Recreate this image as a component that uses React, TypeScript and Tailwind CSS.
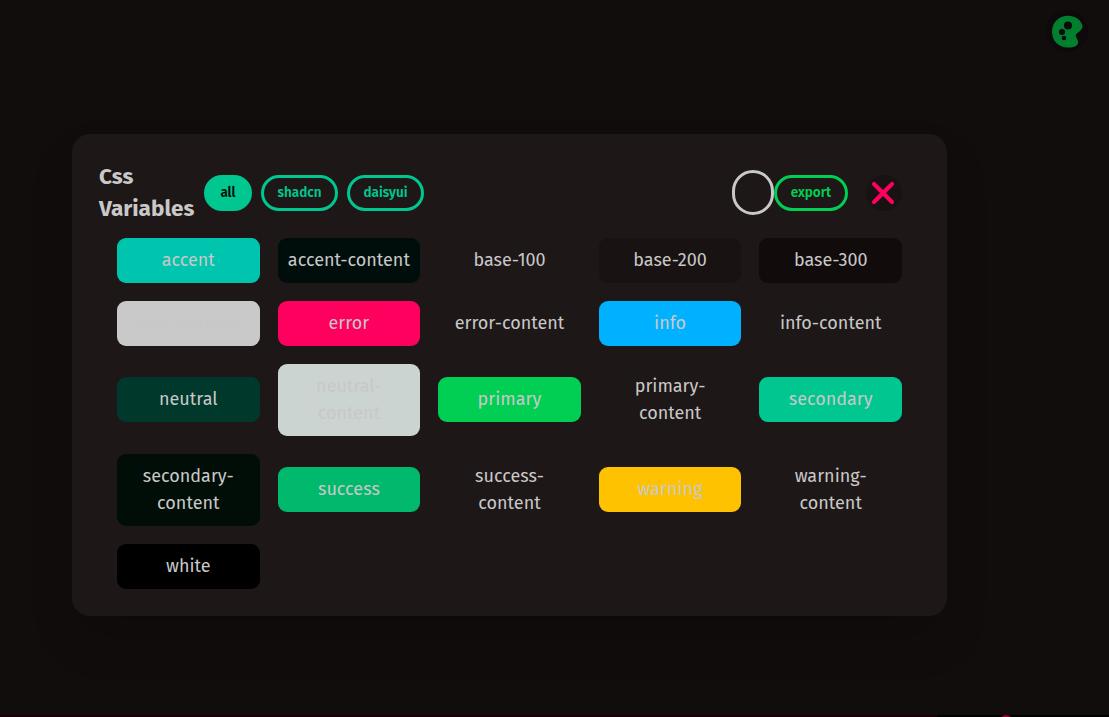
import React from "react";

type Swatch = { name: string; color: string };

const swatches: Swatch[] = [
  { name: "accent", color: "bg-[#00c5ae]" },
  { name: "accent-content", color: "bg-[#000e0b]" },
  { name: "base-100", color: "bg-transparent" },
  { name: "base-200", color: "bg-[#181212]" },
  { name: "base-300", color: "bg-[#120b0b]" },
  { name: "base-content", color: "bg-[#cac9c9]" },
  { name: "error", color: "bg-[#ff005e]" },
  { name: "error-content", color: "bg-transparent" },
  { name: "info", color: "bg-[#00b1ff]" },
  { name: "info-content", color: "bg-transparent" },
  { name: "neutral", color: "bg-[#00392b]" },
  { name: "neutral-content", color: "bg-[#cbd4d0]" },
  { name: "primary", color: "bg-[#00cf54]" },
  { name: "primary-content", color: "bg-transparent" },
  { name: "secondary", color: "bg-[#00c78f]" },
  { name: "secondary-content", color: "bg-[#000e07]" },
  { name: "success", color: "bg-[#00b96d]" },
  { name: "success-content", color: "bg-transparent" },
  { name: "warning", color: "bg-[#ffc200]" },
  { name: "warning-content", color: "bg-transparent" },
  { name: "white", color: "bg-black" },
];

const pill =
  "flex h-9 items-center justify-center rounded-full border-[3px] text-[13.5px] font-semibold leading-none";

function PaletteIcon() {
  return (
    <svg className="size-[34px]" viewBox="0 0 34 34" fill="#00802f">
      <path
        fillRule="evenodd"
        d="M18 .8C8.500 .8 2 7.800 2 16.800s6.500 15.700 15.500 15.700c2.500 0 5-.2 7.400-1.100 2.600-1 3.600-2.900 3.100-5.100-.5-2.300-2.700-4.200-2.200-6.200.5-1.900 3-3 4.700-4.600 1.800-1.700 2.400-3.700 1.600-5.900C30.300 4.300 25 .8 18 .8Zm0 5.700a4 4 0 1 1 0 8 4 4 0 0 1 0-8ZM12 14a3 3 0 1 1 0 6 3 3 0 0 1 0-6Zm2 6.700a2.300 2.300 0 1 1 0 4.600 2.300 2.300 0 0 1 0-4.600Z"
      />
    </svg>
  );
}

export default function App() {
  return (
    <div className="flex h-[717px] w-full flex-col overflow-hidden bg-[#110d0c] font-['Fira_Sans','Noto_Sans',sans-serif] text-[#c9c8c8]">
      <header className="flex h-[134px] items-start justify-end pr-[21px] pt-[10px]">
        <button className="flex size-[42px] items-center justify-center rounded-full bg-[#0e090a] pt-px" aria-label="Theme">
          <PaletteIcon />
        </button>
      </header>
      <main className="ml-[72px] h-[482px] w-[875px] rounded-[18px] bg-[#1d1717] px-[27px] pt-[27px] shadow-[0_25px_50px_-12px_rgba(0,0,0,0.25)]">
        <div className="flex h-16 items-center">
          <h1 className="w-[105px] text-[22.5px] font-bold leading-8">Css Variables</h1>
          <div className="flex gap-[9px]">
            <button className={`${pill} w-12 border-[#00c78f] bg-[#00c78f] text-[#000e07]`}>all</button>
            <button className={`${pill} w-[77px] border-[#00c78f] text-[#00c78f]`}>shadcn</button>
            <button className={`${pill} w-[77px] border-[#00c78f] text-[#00c78f]`}>daisyui</button>
          </div>
          <div className="ml-auto mr-[18px] flex items-center">
            <span className="mb-px h-[45px] w-[42px] rounded-full border-[3px] border-[#c9c8c8]" />
            <button className={`${pill} w-[74px] border-[#00cf54] text-[#00cf54]`}>export</button>
            <button className="ml-[18px] flex size-9 items-center justify-center rounded-full bg-[#181212] pr-[2px]" aria-label="Close">
              <svg className="size-6" viewBox="0 0 24 24" fill="none" stroke="#ff005e" strokeWidth="4.200" strokeLinecap="round">
                <path d="m3 3 18 18M21 3 3 21" />
              </svg>
            </button>
          </div>
        </div>
        <div className="grid grid-cols-5 items-center gap-[18px] px-[18px] pt-[12.8px]">
          {swatches.map((s) => (
            <div key={s.name} className={`${s.color} rounded-[9px] px-[9px] py-[9px] text-center text-[18px] leading-[27px]`}>
              {s.name}
            </div>
          ))}
        </div>
      </main>
      <div className="mt-auto flex h-[2px] justify-end bg-[#1c0009]">
        <div className="flex w-[172px] justify-start overflow-hidden rounded-tl-sm bg-black pl-[62px]">
          <span className="h-[14px] w-[14px] shrink-0 rounded-full bg-[#920034]" />
        </div>
      </div>
    </div>
  );
}
